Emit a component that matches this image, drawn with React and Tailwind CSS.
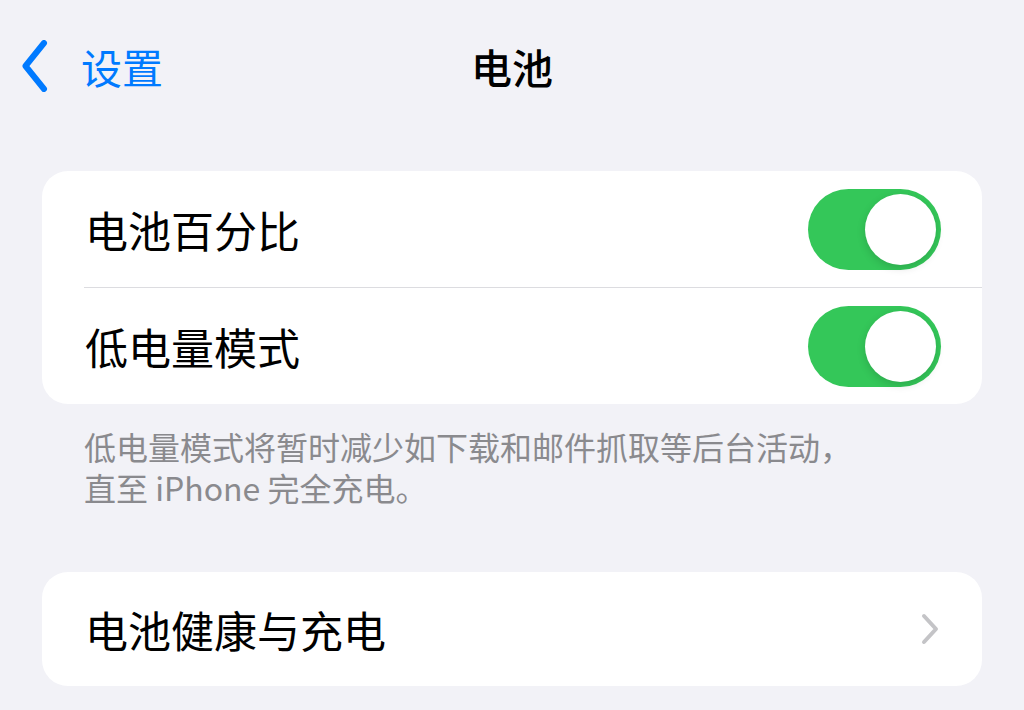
import React, { useState } from 'react';

const font = { fontFamily: '"Noto Sans CJK SC", "Noto Sans", sans-serif' };

const Toggle = ({ on, onChange }) => (
  <button
    onClick={onChange}
    className={`w-[133px] h-[81px] rounded-full p-[5px] flex items-center transition-colors ${
      on ? 'bg-[#34c759] justify-end' : 'bg-[#e9e9ea] justify-start'
    }`}
  >
    <span className="block w-[71px] h-[71px] rounded-full bg-white shadow-[0_3px_8px_rgba(0,0,0,0.15)]" />
  </button>
);

const App = () => {
  const [percent, setPercent] = useState(true);
  const [lowPower, setLowPower] = useState(true);

  return (
    <div className="w-[1024px] h-[710px] bg-[#f2f2f7] overflow-hidden" style={font}>
      {/* 导航栏 */}
      <div className="h-[132px] grid grid-cols-[1fr_auto_1fr] items-center">
        <div className="flex items-center pl-[22px]">
          <svg width="26" height="52" viewBox="0 0 26 52" fill="none">
            <path d="M22 3 L3.5 26 L22 49" stroke="#007aff" strokeWidth="6" strokeLinecap="round" strokeLinejoin="round" />
          </svg>
          <span className="ml-[33px] text-[41px] leading-none text-[#007aff]">设置</span>
        </div>
        <div className="text-[41px] leading-none font-medium text-black">电池</div>
        <div />
      </div>

      <div className="px-[42px] pt-[39px]">
        {/* 电池百分比 / 低电量模式 */}
        <div className="bg-white rounded-[26px] overflow-hidden">
          <div className="h-[116px] flex items-center justify-between pl-[43px] pr-[41px]">
            <span className="text-[43px] leading-none text-black">电池百分比</span>
            <Toggle on={percent} onChange={() => setPercent((p) => !p)} />
          </div>
          <div className="ml-[42px] h-px bg-[#dcdce0]" />
          <div className="h-[116px] flex items-center justify-between pl-[43px] pr-[41px]">
            <span className="text-[43px] leading-none text-black">低电量模式</span>
            <Toggle on={lowPower} onChange={() => setLowPower((p) => !p)} />
          </div>
        </div>

        <p className="pl-[42px] pt-[22px] text-[32px] leading-[41px] text-[#8a8a8e]">
          低电量模式将暂时减少如下载和邮件抓取等后台活动，
          <br />
          直至 iPhone 完全充电。
        </p>

        {/* 电池健康与充电 */}
        <div className="mt-[64px] bg-white rounded-[26px] h-[114px] flex items-center justify-between pl-[43px] pr-[42px]">
          <span className="text-[43px] leading-none text-black">电池健康与充电</span>
          <svg width="20" height="32" viewBox="0 0 20 32" fill="none">
            <path d="M4 3 L16 16 L4 29" stroke="#c4c4c7" strokeWidth="4" strokeLinecap="round" strokeLinejoin="round" />
          </svg>
        </div>
      </div>
    </div>
  );
};

export default App;
